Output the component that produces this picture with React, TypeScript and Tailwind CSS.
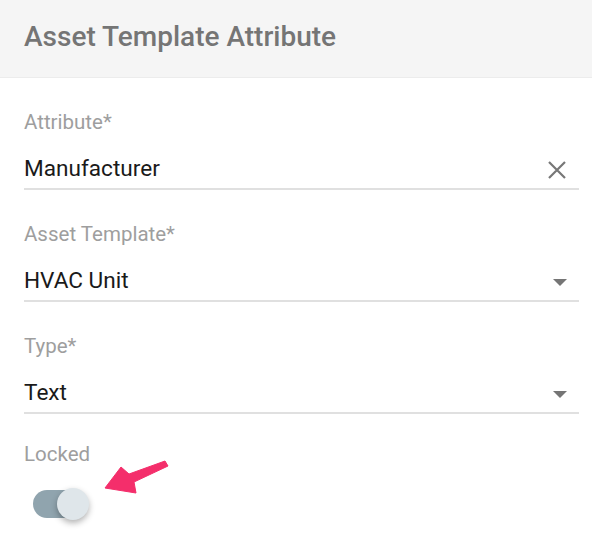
import { useState } from 'react';

function Field({ label, value, kind }: { label: string; value: string; kind: 'clear' | 'select' }) {
  return (
    <div className="mb-8">
      <div className="text-[20.5px] leading-6 text-[#9e9e9e]">{label}</div>
      <div className="mt-3 flex h-[44px] items-end border-b-2 border-[#e0e0e0] pb-[7px]">
        <span className="flex-1 text-[22.6px] leading-6 text-[#1a1a1a]">{value}</span>
        {kind === 'clear' ? (
          <svg width="18" height="18" viewBox="0 0 18 18" className="mb-[2px] mr-[13px]">
            <path d="M1 1L17 17M17 1L1 17" stroke="#777" strokeWidth="2.2" />
          </svg>
        ) : (
          <svg width="14" height="7" viewBox="0 0 14 7" className="mb-[7px] mr-[12px]">
            <path d="M0 0H14L7 7Z" fill="#757575" />
          </svg>
        )}
      </div>
    </div>
  );
}

export default function App() {
  const [locked, setLocked] = useState(true);

  return (
    <div
      className="relative h-[548px] w-[592px] overflow-hidden bg-white"
      style={{ fontFamily: 'Roboto, "Noto Sans", sans-serif' }}
    >
      <div className="flex h-[78px] items-center border-b border-[#ececec] bg-[#f5f5f5] px-6 pb-[3px]">
        <h1 className="text-[28px] font-medium text-[#757575]">Asset Template Attribute</h1>
      </div>

      <div className="pl-6 pr-[13px] pt-8">
        <Field label="Attribute*" value="Manufacturer" kind="clear" />
        <Field label="Asset Template*" value="HVAC Unit" kind="select" />
        <Field label="Type*" value="Text" kind="select" />

        <div className="-mt-[4px] text-[20.5px] leading-6 text-[#9e9e9e]">Locked</div>
        <button
          onClick={() => setLocked(!locked)}
          className="relative ml-[9px] mt-6 h-[28px] w-[54px] rounded-full bg-[#90a4ae]"
        >
          <span
            className={`absolute top-[-2px] h-[32px] w-[32px] rounded-full bg-[#dfe6ea] shadow-[0_3px_6px_rgba(0,0,0,0.3)] ${
              locked ? 'left-[24px]' : 'left-[-2px]'
            }`}
          />
        </button>
      </div>

      <svg className="absolute left-[100px] top-[458px]" width="72" height="40" viewBox="0 0 72 40">
        <path
          d="M65 3 L68 8 L34 24 L36 35 L5 30 L21 9 L29 16 Z"
          fill="#f42e6b"
          stroke="#f42e6b"
          strokeWidth="1"
          strokeLinejoin="round"
        />
      </svg>
    </div>
  );
}
